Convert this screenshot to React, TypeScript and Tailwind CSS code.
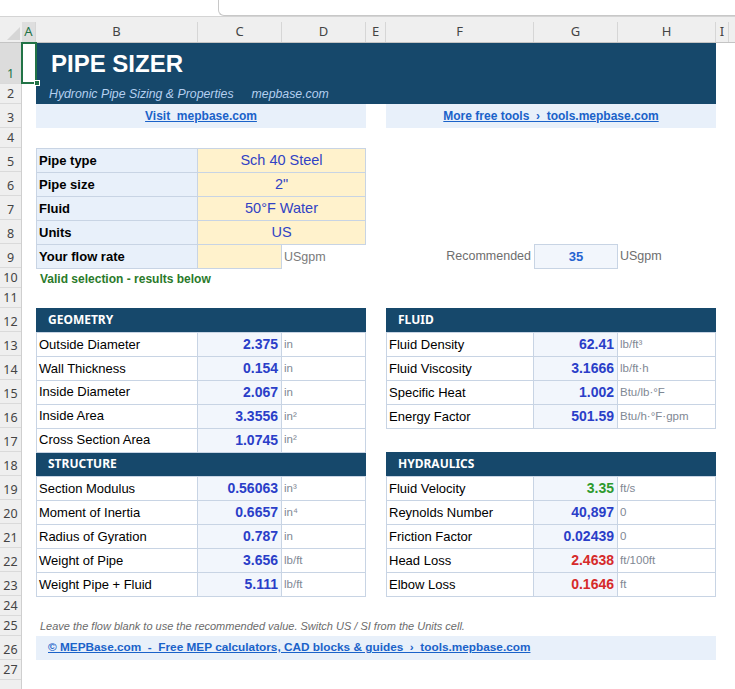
import React from "react";

type Tone = "blue" | "green" | "red";
type Result = { label: string; value: string; unit: string; tone?: Tone };

const toneClass: Record<Tone, string> = {
  blue: "text-[#2a3ec8]",
  green: "text-[#2e9a2e]",
  red: "text-[#d62a2a]",
};

// sheet row heights, row 1 .. 28 (the last one is only partly on screen)
const rowHeights = [41, 20, 24, 20, 24, 24, 24, 24, 24, 20, 20, 24, 24, 24, 24, 24, 24, 24, 24, 24, 24, 24, 24, 20, 20, 24, 20, 20];
const heightClass: Record<number, string> = { 41: "h-[41px]", 20: "h-5", 24: "h-6" };

const columns = [
  { name: "A", w: "w-[14px]", active: true },
  { name: "B", w: "w-[162px]" },
  { name: "C", w: "w-[84px]" },
  { name: "D", w: "w-[84px]" },
  { name: "E", w: "w-[20px]" },
  { name: "F", w: "w-[148px]" },
  { name: "G", w: "w-[84px]" },
  { name: "H", w: "w-[98px]" },
  { name: "I", w: "w-[13px]" },
  { name: "", w: "flex-1" },
];

const inputs = [
  { label: "Pipe type", value: "Sch 40 Steel" },
  { label: "Pipe size", value: '2"' },
  { label: "Fluid", value: "50°F Water" },
  { label: "Units", value: "US" },
];

const geometry: Result[] = [
  { label: "Outside Diameter", value: "2.375", unit: "in" },
  { label: "Wall Thickness", value: "0.154", unit: "in" },
  { label: "Inside Diameter", value: "2.067", unit: "in" },
  { label: "Inside Area", value: "3.3556", unit: "in²" },
  { label: "Cross Section Area", value: "1.0745", unit: "in²" },
];

const structure: Result[] = [
  { label: "Section Modulus", value: "0.56063", unit: "in³" },
  { label: "Moment of Inertia", value: "0.6657", unit: "in⁴" },
  { label: "Radius of Gyration", value: "0.787", unit: "in" },
  { label: "Weight of Pipe", value: "3.656", unit: "lb/ft" },
  { label: "Weight Pipe + Fluid", value: "5.111", unit: "lb/ft" },
];

const fluid: Result[] = [
  { label: "Fluid Density", value: "62.41", unit: "lb/ft³" },
  { label: "Fluid Viscosity", value: "3.1666", unit: "lb/ft·h" },
  { label: "Specific Heat", value: "1.002", unit: "Btu/lb·°F" },
  { label: "Energy Factor", value: "501.59", unit: "Btu/h·°F·gpm" },
];

const hydraulics: Result[] = [
  { label: "Fluid Velocity", value: "3.35", unit: "ft/s", tone: "green" },
  { label: "Reynolds Number", value: "40,897", unit: "0" },
  { label: "Friction Factor", value: "0.02439", unit: "0" },
  { label: "Head Loss", value: "2.4638", unit: "ft/100ft", tone: "red" },
  { label: "Elbow Loss", value: "0.1646", unit: "ft", tone: "red" },
];

function SectionHeader({ title }: { title: string }) {
  return (
    <div className="flex h-6 w-[330px] items-center bg-[#16486b] pl-3 font-['Noto_Sans',sans-serif] text-[12px] font-bold text-white">
      {title}
    </div>
  );
}

function ResultRows({ rows, labelW, unitW }: { rows: Result[]; labelW: string; unitW: string }) {
  return (
    <>
      {rows.map((r, i) => {
        const last = i === rows.length - 1;
        return (
          <div
            key={r.label}
            className={`flex w-[330px] border-t border-l border-[#c8d4e4] ${last ? "h-[25px] border-b" : "h-6"}`}
          >
            <div className={`flex ${labelW} items-center border-r border-[#c8d4e4] bg-white pl-[2px] text-[13px] text-black`}>
              {r.label}
            </div>
            <div
              className={`flex w-[84px] items-center justify-end border-r border-[#c8d4e4] bg-[#f2f6fc] pr-[3px] text-[14px] font-bold ${toneClass[r.tone ?? "blue"]}`}
            >
              {r.value}
            </div>
            <div className={`flex ${unitW} items-center border-r border-[#c8d4e4] bg-white pl-[2px] text-[11.5px] text-[#7f8894]`}>
              {r.unit}
            </div>
          </div>
        );
      })}
    </>
  );
}

function RowHeaders() {
  return (
    <div className="flex w-[22px] shrink-0 flex-col border-r border-[#cfcfcf] bg-[#efefef] font-['Noto_Sans',sans-serif] text-[12.5px]">
      {rowHeights.map((h, i) => (
        <div
          key={i}
          className={`flex ${heightClass[h]} shrink-0 items-end justify-center border-b border-[#dadada] ${
            i === 0 ? "bg-[#dcdcdc] text-[#217346]" : "text-[#444]"
          }`}
        >
          {i < 27 && <span className="leading-[19px]">{i + 1}</span>}
        </div>
      ))}
    </div>
  );
}

export default function App() {
  return (
    <div className="h-[689px] w-[735px] overflow-hidden bg-white font-['Liberation_Sans',Arial,sans-serif]">
      {/* formula bar edge */}
      <div className="flex h-[17px] border-b border-[#d4d4d4] bg-white">
        <div className="w-[218px]" />
        <div className="flex-1 rounded-bl-[6px] border-b border-l border-[#c8c8c8]" />
      </div>

      {/* column headers */}
      <div className="flex h-[26px] items-end border-b border-[#c4c4c4] bg-[#efefef] font-['Noto_Sans',sans-serif] text-[13px] text-[#444]">
        <div className="flex h-5 w-[22px] items-end justify-end pr-[2px] pb-[2px]">
          <svg width="13" height="13" viewBox="0 0 13 13">
            <path d="M0 13 L13 0 L13 13 Z" fill="#d6d6d6" />
          </svg>
        </div>
        {columns.map((c) => (
          <div
            key={c.name || "rest"}
            className={`flex h-5 ${c.w} items-center justify-center ${c.name ? "border-r border-[#d6d6d6]" : ""} ${
              c.active ? "bg-[#dedede] text-[#217346]" : ""
            }`}
          >
            {c.name}
          </div>
        ))}
      </div>

      <div className="flex">
        <RowHeaders />

        {/* column A holds the active cell outline */}
        <div className="relative w-[14px] shrink-0">
          <div className="absolute -top-px -left-px h-[42px] w-[16px] border-2 border-[#217346]" />
          <div className="absolute top-[37px] left-[12px] h-[6px] w-[6px] border border-white bg-[#217346]" />
        </div>

        <div className="w-[680px] shrink-0">
          {/* rows 1-2 */}
          <div className="h-[61px] bg-[#16486b]">
            <div className="flex h-[41px] items-center pl-[15px] text-[24px] font-bold text-white">PIPE SIZER</div>
            <div className="flex h-5 items-center pl-[13px] text-[12.3px] italic text-[#b4cff0]">
              <span>Hydronic Pipe Sizing &amp; Properties</span>
              <span className="ml-[18px]">mepbase.com</span>
            </div>
          </div>

          {/* row 3 */}
          <div className="flex h-6 gap-5">
            <div className="flex w-[330px] items-center justify-center bg-[#e8f0fa] text-[12px] font-bold whitespace-pre text-[#1a62c9] underline">
              Visit  mepbase.com
            </div>
            <div className="flex w-[330px] items-center justify-center bg-[#e8f0fa] text-[12px] font-bold whitespace-pre text-[#1a62c9] underline">
              More free tools  ›  tools.mepbase.com
            </div>
          </div>

          <div className="h-5" />

          {/* rows 5-9 */}
          <div className="flex h-[121px] gap-5">
            <div className="flex w-[330px] flex-col">
              {inputs.map((r) => (
                <div key={r.label} className="flex h-6 border-t border-l border-[#c8d4e4]">
                  <div className="flex w-[161px] items-center border-r border-[#c8d4e4] bg-[#e8f0fa] pl-[2px] text-[13px] font-bold text-black">
                    {r.label}
                  </div>
                  <div className="flex w-[168px] items-center justify-center border-r border-[#c8d4e4] bg-[#fff2cc] text-[14.5px] text-[#3143c4]">
                    {r.value}
                  </div>
                </div>
              ))}
              <div className="flex h-[25px] border-t border-[#c8d4e4]">
                <div className="flex w-[162px] items-center border-r border-b border-l border-[#c8d4e4] bg-[#e8f0fa] pl-[2px] text-[13px] font-bold text-black">
                  Your flow rate
                </div>
                <div className="w-[84px] border-r border-b border-[#c8d4e4] bg-[#fff2cc]" />
                <div className="flex items-center pl-[2px] text-[12.5px] text-[#7a7a7a]">USgpm</div>
              </div>
            </div>

            <div className="flex w-[330px] items-start pt-[96px]">
              <div className="flex h-[25px] w-[148px] items-center justify-end pr-[3px] text-[12.5px] text-[#6e6e6e]">
                Recommended
              </div>
              <div className="flex h-[25px] w-[84px] items-center justify-center border border-[#c8d4e4] bg-[#f2f6fc] text-[13px] font-bold text-[#2563d0]">
                35
              </div>
              <div className="flex h-[25px] items-center pl-[2px] text-[12.5px] text-[#6e6e6e]">USgpm</div>
            </div>
          </div>

          {/* row 10 */}
          <div className="flex h-[19px] items-center pl-[4px] text-[12px] font-bold text-[#2a7a2a]">
            Valid selection - results below
          </div>
          <div className="h-5" />

          {/* rows 12-23 */}
          <div className="flex h-[289px] gap-5">
            <div className="flex flex-col">
              <SectionHeader title="GEOMETRY" />
              <ResultRows rows={geometry} labelW="w-[161px]" unitW="w-[84px]" />
              <SectionHeader title="STRUCTURE" />
              <ResultRows rows={structure} labelW="w-[161px]" unitW="w-[84px]" />
            </div>
            <div className="flex flex-col">
              <SectionHeader title="FLUID" />
              <ResultRows rows={fluid} labelW="w-[147px]" unitW="w-[98px]" />
              <div className="h-[23px]" />
              <SectionHeader title="HYDRAULICS" />
              <ResultRows rows={hydraulics} labelW="w-[147px]" unitW="w-[98px]" />
            </div>
          </div>

          <div className="h-[19px]" />

          {/* row 25 */}
          <div className="flex h-5 items-center pl-[4px] text-[11px] italic text-[#6b6b6b]">
            Leave the flow blank to use the recommended value. Switch US / SI from the Units cell.
          </div>

          {/* row 26 */}
          <div className="flex h-6 items-center bg-[#e8f0fa] pl-3 text-[11.8px] font-bold whitespace-pre text-[#1a62c9] underline">
            © MEPBase.com  -  Free MEP calculators, CAD blocks &amp; guides  ›  tools.mepbase.com
          </div>
        </div>
      </div>
    </div>
  );
}
